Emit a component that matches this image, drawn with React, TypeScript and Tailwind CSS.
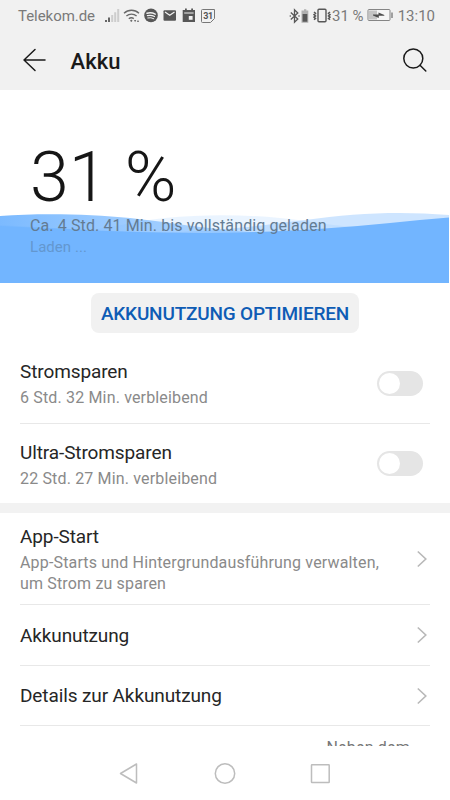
import { ReactNode } from 'react'

function StatusBar() {
  return (
    <div className="flex h-8 items-center pl-[18px] pr-[15px] text-[15px] leading-none text-[#7a7a7a]">
      <span className="w-[78px] tracking-[-0.05px]">Telekom.de</span>

      {/* Signal */}
      <svg className="ml-2 shrink-0" width="16" height="16" viewBox="0 0 16 16">
        <path d="M1 12h2v2H1zM4 9.5h2V14H4z" fill="#666" />
        <path d="M7.2 7h2v7h-2zM10.2 4.3h2V14h-2zM13.2 1h2v13h-2z" fill="#cdcdcd" />
      </svg>
      {/* Wi-Fi */}
      <svg className="ml-[3px] shrink-0" width="17" height="16" viewBox="0 0 17 16" fill="none" stroke="#696969" strokeWidth="1.4">
        <path d="M1 5.2a11 11 0 0 1 15 0M3.4 8.1a7.6 7.6 0 0 1 10.2 0M5.8 10.8a4 4 0 0 1 5 -.2" />
        <path d="M8.3 11.5l1.3 1.3-1.3 1.3L7 12.8z" fill="#696969" stroke="none" />
        <path d="M11 12h2.2l-1.1 2.2zM14 14h2l-1-2.2z" fill="#696969" stroke="none" />
      </svg>
      {/* Spotify */}
      <svg className="ml-[4px] shrink-0" width="14" height="16" viewBox="0 0 14 16" fill="none" stroke="#f1f1f1" strokeLinecap="round">
        <circle cx="7" cy="7.4" r="6.8" fill="#575757" stroke="none" />
        <path d="M3 5.3q4.3-1.2 8.2.8" strokeWidth="1.5" />
        <path d="M3.4 7.7q3.7-1 7.1.8" strokeWidth="1.2" />
        <path d="M3.8 9.9q3.2-.8 6 .8" strokeWidth="1" />
      </svg>
      {/* Mail */}
      <svg className="ml-[5px] shrink-0" width="14" height="16" viewBox="0 0 14 16">
        <rect x="0.5" y="2.2" width="12.5" height="10.5" rx="1" fill="#575757" />
        <path d="M2 4l4.75 3.3L11.5 4" fill="none" stroke="#f1f1f1" strokeWidth="1.2" />
      </svg>
      {/* Calendar */}
      <svg className="ml-[5px] shrink-0" width="14" height="16" viewBox="0 0 14 16">
        <path d="M3 .5h1.8v1.4h4.4V.5H11v1.4h2v12H.7v-12H3z" fill="#575757" />
        <path d="M2.2 5h9.4" stroke="#f1f1f1" strokeWidth="1" />
        <path d="M6.8 8h3.8v3.8H6.8z" fill="#f1f1f1" />
      </svg>
      <div className="relative -mt-px ml-[5px] h-[14px] w-[14px] shrink-0">
        <svg className="absolute inset-0" width="14" height="14" viewBox="0 0 14 14" fill="none" stroke="#777">
          <path d="M1.5.5h12v9l-4 4h-8a1 1 0 0 1-1-1v-11a1 1 0 0 1 1-1z" />
        </svg>
        <span className="absolute inset-0 text-center text-[9px] font-bold leading-[14px] tracking-[-0.3px] text-[#555]">31</span>
      </div>

      {/* Bluetooth and device battery */}
      <svg className="ml-auto shrink-0" width="20" height="16" viewBox="0 0 20 16">
        <path d="M1.8 4.5l7 6.5-3.3 3.2V1.8L8.8 5l-7 6.5" fill="none" stroke="#575757" strokeWidth="1.3" />
        <circle cx="1.3" cy="8" r=".8" fill="#575757" />
        <circle cx="10" cy="8" r=".8" fill="#575757" />
        <path d="M12.5 2.5H15V1.2h2.3v1.3h2v12.2h-6.8z" fill="#b0b0b0" />
        <path d="M13.6 6h4.7v7.7h-4.7z" fill="#575757" />
      </svg>
      {/* Vibration */}
      <svg className="ml-1 shrink-0" width="18" height="16" viewBox="0 0 18 16" fill="none" stroke="#575757">
        <rect x="5" y="1.3" width="8" height="12.5" rx="1" strokeWidth="1.4" />
        <path d="M1 4l1.5 1.3L1 6.6l1.5 1.3L1 9.2l1.5 1.3L1 11.8M17 4l-1.5 1.3L17 6.6l-1.5 1.3L17 9.2l-1.5 1.3L17 11.8" strokeWidth="1.5" />
      </svg>
      <span className="ml-px w-[32px] whitespace-nowrap">31 %</span>
      {/* Charging battery */}
      <svg className="ml-[3px] shrink-0" width="26" height="16" viewBox="0 0 26 16">
        <rect x="1" y="1.5" width="22" height="11" rx="1" fill="#f5f5f5" stroke="#858585" />
        <path d="M2 2.5h8v9H2z" fill="#c4c4c4" />
        <path d="M6 6.6h5.5V4.4l5.8 2.6v.8h-5.5v2.1L6 7.5z" fill="#4d4d4d" />
        <path d="M25 4.5v5.6" stroke="#757575" strokeWidth="1.3" />
      </svg>
      <span className="ml-[4px] w-[38px] text-right">13:10</span>
    </div>
  )
}

function Header() {
  return (
    <header className="flex h-[58px] items-center pl-[22px] pr-[22px] text-[#1a1a1a]">
      <svg className="-mt-0.5 shrink-0" width="26" height="26" viewBox="0 0 26 26" fill="none" stroke="currentColor" strokeWidth="1.5" strokeLinecap="round" strokeLinejoin="round">
        <path d="M23 13H2M13 2.5L2 13l11 10.5" />
      </svg>
      <h1 className="ml-[22.5px] mt-px text-[22px] font-medium leading-none tracking-[0.1px]">Akku</h1>
      <svg className="-mt-0.5 ml-auto" width="26" height="26" viewBox="0 0 26 26" fill="none" stroke="currentColor" strokeWidth="1.5" strokeLinecap="round">
        <circle cx="11.3" cy="11.5" r="9.5" />
        <path d="M18 18.3l5.8 5.7" />
      </svg>
    </header>
  )
}

function BatteryLevel() {
  return (
    <section className="relative h-[193px] pl-[30px]">
      {/* Water level: three translucent waves over a solid body */}
      <svg className="absolute left-0 top-0" width="449" height="193" viewBox="0 90 449 193" fill="#72b5ff">
        <defs>
          <linearGradient id="wave" gradientUnits="userSpaceOnUse" x1="0" y1="0" x2="230" y2="0">
            <stop offset="0" stopColor="#72b5ff" stopOpacity="0.93" />
            <stop offset="1" stopColor="#72b5ff" stopOpacity="0.5" />
          </linearGradient>
        </defs>
        <path d="M0 231C70 240 125 222 165 218C215 213 260 215 305 221C350 228 400 232 449 230V283H0z" fillOpacity="0.15" />
        <path d="M0 225C70 229 130 233 180 232C235 230 270 224 305 220C355 213 400 211 449 215V283H0z" fillOpacity="0.35" />
        <path d="M0 216C40 213 90 214 130 218C170 222 205 229 250 232C330 236 385 236 449 236V283H0z" fill="url(#wave)" />
        <path d="M0 226C70 229 130 233 190 233C270 233 330 229 390 223C410 221 430 219 449 217.5V283H0z" />
      </svg>
      <div className="relative">
        <div className="pt-[46px] text-[70px] font-light leading-[82px] text-[#161616]">31 %</div>
        <div className="text-base leading-4 tracking-[0.11px] text-[#637b92]">Ca. 4 Std. 41 Min. bis vollständig geladen</div>
        <div className="mt-[5px] text-[15px] leading-4 tracking-[0.05px] text-[#6397cf]">Laden ...</div>
      </div>
    </section>
  )
}

function Toggle() {
  return (
    <button role="switch" aria-checked="false" className="mr-[7px] flex h-[25px] w-[46px] items-center rounded-full bg-[#e5e5e5] pl-[2px]">
      <span className="h-[21px] w-[21px] rounded-full bg-white" />
    </button>
  )
}

function Chevron() {
  return (
    <svg className="mr-[2px] shrink-0" width="12" height="18" viewBox="0 0 12 18" fill="none" stroke="#b8b8b8" strokeWidth="1.6">
      <path d="M1.8 1.5L9.8 9l-8 7.5" />
    </svg>
  )
}

function Row({ title, sub, className, children }: { title: string; sub?: ReactNode; className: string; children: ReactNode }) {
  return (
    <div className={`mx-5 flex items-center justify-between ${className}`}>
      <div className={sub ? 'pt-[2px]' : 'pt-px'}>
        <div className="text-[19px] leading-6 tracking-[-0.11px] text-[#262626]">{title}</div>
        {sub && <div className="mt-[3px] text-base leading-[21px] tracking-[0.16px] text-[#8a8a8a]">{sub}</div>}
      </div>
      {children}
    </div>
  )
}

export default function App() {
  return (
    <div className="flex h-[800px] w-[450px] flex-col overflow-hidden bg-white font-['Roboto',sans-serif]">
      <div className="h-[90px] shrink-0 bg-[#f1f1f1]">
        <StatusBar />
        <Header />
      </div>

      <main className="h-[656px] shrink-0 overflow-hidden">
        <BatteryLevel />
        <div className="flex h-[60px] justify-center pt-[10px]">
          <button className="h-10 w-[268px] whitespace-nowrap rounded-lg bg-[#f1f1f1] pt-[2px] text-[19px] font-medium tracking-[-0.2px] text-[#0e5cb5]">
            AKKUNUTZUNG OPTIMIEREN
          </button>
        </div>

        <Row title="Stromsparen" sub="6 Std. 32 Min. verbleibend" className="h-[81px] border-b border-[#e8e8e8]">
          <Toggle />
        </Row>
        <Row title="Ultra-Stromsparen" sub="22 Std. 27 Min. verbleibend" className="h-[79px]">
          <Toggle />
        </Row>
        <div className="h-[10px] bg-[#f2f2f2]" />
        <Row
          title="App-Start"
          sub={<>App-Starts und Hintergrundausführung verwalten,<br />um Strom zu sparen</>}
          className="h-[92px] border-b border-[#e8e8e8]"
        >
          <Chevron />
        </Row>
        <Row title="Akkunutzung" className="h-[61px] border-b border-[#e8e8e8]">
          <Chevron />
        </Row>
        <Row title="Details zur Akkunutzung" className="h-[60px] border-b border-[#e8e8e8]">
          <Chevron />
        </Row>
        {/* Next entry, cut off by the navigation bar */}
        <div className="pr-[40px] pt-[12px] text-right text-base leading-5 tracking-[0.2px] text-[#777]">Neben dem</div>
      </main>

      <nav className="flex flex-1 justify-center">
        <svg width="220" height="54" viewBox="115 746 220 54" fill="none" stroke="#bdbdbd" strokeWidth="1.5" strokeLinejoin="round">
          <path d="M120.5 773.5L136.5 764v19z" />
          <circle cx="225" cy="773.5" r="9.7" />
          <rect x="311.5" y="764.7" width="17.7" height="17.7" rx="0.5" />
        </svg>
      </nav>
    </div>
  )
}
